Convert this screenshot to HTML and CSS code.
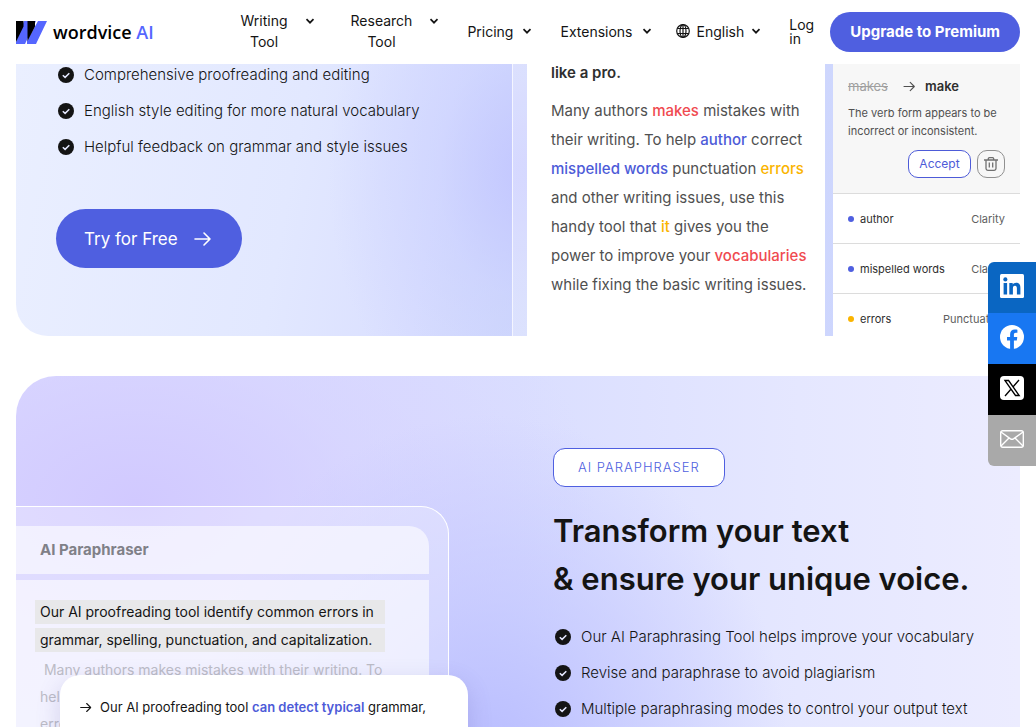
FILE: index.html
```
<!DOCTYPE html>
<html lang="en">

<head>
  <meta charset="utf-8">
  <meta name="viewport" content="width=device-width, initial-scale=1">
  <title>Wordvice AI</title>
  <link rel="stylesheet" href="styles.css">
</head>

<body>

  <!-- shared icons -->
  <svg class="sprite" aria-hidden="true">
    <symbol id="chevron" viewBox="0 0 10 10">
      <path d="M1.5 3.2 5 6.7 8.5 3.2" fill="none" stroke="#141414" stroke-width="1.7" />
    </symbol>
    <symbol id="check" viewBox="0 0 16 16">
      <circle cx="8" cy="8" r="8" fill="#141414" />
      <path d="M4.8 8.2 7.1 10.4 11.3 6.2" fill="none" stroke="#e6e9ff" stroke-width="1.5" />
    </symbol>
    <symbol id="arrow" viewBox="0 0 18 16">
      <path d="M1 8h15M10 2l6 6-6 6" fill="none" stroke="currentColor" stroke-width="1.6" stroke-linecap="round" stroke-linejoin="round" />
    </symbol>
  </svg>

  <header class="header">
    <a class="logo" href="/">
      <svg width="31" height="23" viewBox="0 0 31 23" aria-hidden="true">
        <path d="M8 0h12L9 23H0v-2zM22 0h9L20 23h-9v-3z" fill="#5566ff" />
        <path d="M0 0h7.500v5.500L0 21zM11.500 0h7.500v5.500L11.500 20z" fill="#000" />
      </svg>
      <span>wordvice <b>AI</b></span>
    </a>

    <nav class="nav">
      <button class="nav-item nav-item-tall"><span>Writing<br>Tool</span><svg class="chevron"><use href="#chevron" /></svg></button>
      <button class="nav-item nav-item-tall"><span>Research<br>Tool</span><svg class="chevron"><use href="#chevron" /></svg></button>
      <button class="nav-item">Pricing<svg class="chevron"><use href="#chevron" /></svg></button>
      <button class="nav-item">Extensions<svg class="chevron"><use href="#chevron" /></svg></button>
      <button class="nav-item nav-lang">
        <svg width="14" height="14" viewBox="0 0 14 14" fill="none" stroke="#141414" stroke-width="1.2" aria-hidden="true">
          <circle cx="7" cy="7" r="6.300" />
          <ellipse cx="7" cy="7" rx="3" ry="6.300" />
          <path d="M7 .7v12.600M1.300 4.500h11.400M1.300 9.500h11.400" />
        </svg>
        English<svg class="chevron"><use href="#chevron" /></svg>
      </button>
      <a class="login" href="/login">Log in</a>
    </nav>
    <a class="upgrade" href="/pricing">Upgrade to Premium</a>
  </header>

  <main class="main">

    <section class="card card-proof">
      <div class="proof-intro">
        <ul class="checks">
          <li><svg><use href="#check" /></svg>Comprehensive proofreading and editing</li>
          <li><svg><use href="#check" /></svg>English style editing for more natural vocabulary</li>
          <li><svg><use href="#check" /></svg>Helpful feedback on grammar and style issues</li>
        </ul>
        <a class="try" href="/proofreader">Try for Free
          <svg width="18" height="16"><use href="#arrow" /></svg>
        </a>
      </div>

      <div class="proof-demo">
        <div class="editor">
          <h3>like a pro.</h3>
          <p>Many authors <em class="red">makes</em> mistakes with<br>
            their writing. To help <em class="blue">author</em> correct<br>
            <em class="blue">mispelled words</em> punctuation <em class="yellow">errors</em><br>
            and other writing issues, use this<br>
            handy tool that <em class="yellow">it</em> gives you the<br>
            power to improve your <em class="red">vocabularies</em><br>
            while fixing the basic writing issues.</p>
        </div>

        <div class="suggestions">
          <div class="suggestion-open">
            <div class="change">
              <del>makes</del>
              <svg width="13" height="11"><use href="#arrow" /></svg>
              <ins>make</ins>
            </div>
            <p>The verb form appears to be incorrect or inconsistent.</p>
            <div class="actions">
              <button class="accept">Accept</button>
              <button class="trash" aria-label="Dismiss">
                <svg width="14" height="14" viewBox="0 0 14 14" fill="none" stroke="#707070" stroke-width="1.3">
                  <path d="M0 3h14M4.300 3V1.800Q4.300.7 5.400.7h3.200q1.100 0 1.100 1.100V3M2 3v8.500q0 1.800 1.800 1.800h6.400q1.800 0 1.800-1.800V3M5.300 5.500v5M8.700 5.500v5" />
                </svg>
              </button>
            </div>
          </div>
          <ul class="issues">
            <li class="issue-blue"><span>author</span><span>Clarity</span></li>
            <li class="issue-blue"><span>mispelled words</span><span>Clarity</span></li>
            <li class="issue-yellow"><span>errors</span><span>Punctuation</span></li>
          </ul>
        </div>
      </div>
    </section>

    <section class="card card-para">
      <div class="para-demo">
        <div class="para-frame">
          <h3>AI Paraphraser</h3>
          <div class="para-body">
            <p class="marked"><mark>Our AI proofreading tool identify common errors in</mark><mark>grammar, spelling, punctuation, and capitalization.</mark></p>
            <p class="faded">&nbsp;Many authors makes mistakes with their writing. To<br>help author correct mispelled words punctuation<br>errors and other writing issues.</p>
          </div>
        </div>
        <div class="result">
          <svg width="12" height="11"><use href="#arrow" /></svg>
          <p>Our AI proofreading tool <b>can detect typical</b> grammar,<br>
            <span>spelling, punctuation, <b>and capitalization</b></span></p>
        </div>
      </div>

      <div class="para-intro">
        <span class="tag">AI PARAPHRASER</span>
        <h2>Transform your text<br>&amp; ensure your unique voice.</h2>
        <ul class="checks">
          <li><svg><use href="#check" /></svg>Our AI Paraphrasing Tool helps improve your vocabulary</li>
          <li><svg><use href="#check" /></svg>Revise and paraphrase to avoid plagiarism</li>
          <li><svg><use href="#check" /></svg>Multiple paraphrasing modes to control your output text</li>
        </ul>
      </div>
    </section>

  </main>

  <aside class="share">
    <a class="linkedin" href="#" aria-label="LinkedIn">
      <svg width="24" height="24" viewBox="0 0 24 24">
        <rect width="24" height="24" rx="1.500" fill="#fff" />
        <path d="M3.600 9h3.500v11.400H3.600zM9.300 9h3.400v1.600c.7-1.200 1.900-1.900 3.400-1.900 3.400 0 4.300 2.200 4.300 5.200v6.500h-3.500v-5.800c0-1.500-.2-2.900-1.900-2.900s-2.100 1.300-2.100 2.800v5.900H9.300z" fill="#0a66c2" />
        <circle cx="5.350" cy="5.400" r="2.050" fill="#0a66c2" />
      </svg>
    </a>
    <a class="facebook" href="#" aria-label="Facebook">
      <svg width="24" height="24" viewBox="0 0 24 24">
        <circle cx="12" cy="12" r="12" fill="#fff" />
        <path d="M10.100 24v-8.500H7V12h3.100V9.300c0-3 1.800-4.700 4.600-4.700 1.300 0 2.700.2 2.700.2v3h-1.500c-1.500 0-2 .9-2 1.900V12h3.400l-.5 3.500h-2.900V24z" fill="#1877f2" />
      </svg>
    </a>
    <a class="x" href="#" aria-label="X">
      <svg width="24" height="24" viewBox="0 0 24 24">
        <rect width="24" height="24" rx="4" fill="#fff" />
        <path d="M4.900 4.500h3.700l10.600 15h-3.700zM19 4l-6.300 7.200M10.900 13.200 5 20" fill="none" stroke="#000" stroke-width="1.300" />
      </svg>
    </a>
    <a class="mail" href="#" aria-label="Email">
      <svg width="24" height="18" viewBox="0 0 24 18" fill="none" stroke="#fff" stroke-width="1.400">
        <rect x=".7" y=".7" width="22.600" height="16.600" rx="2" />
        <path d="M1 2l9.500 6.800q1.500 1 3 0L23 2M1 16l8-8M23 16l-8-8" />
      </svg>
    </a>
  </aside>

</body>

</html>
```

FILE: styles.css
```
* {
  box-sizing: border-box;
}

body {
  margin: 0;
  height: 100vh;
  overflow: hidden;
  display: flex;
  flex-direction: column;
  background: #fff;
  color: #141414;
  font-family: Inter, "Liberation Sans", sans-serif;
  font-size: 14px;
}

h2,
h3,
p,
ul {
  margin: 0;
  padding: 0;
}

ul {
  list-style: none;
}

a {
  color: inherit;
  text-decoration: none;
}

button {
  padding: 0;
  border: 0;
  background: none;
  color: inherit;
  font: inherit;
  cursor: pointer;
}

svg {
  flex: none;
}

.sprite {
  position: absolute;
  width: 0;
  height: 0;
}

/* header */

.header {
  display: flex;
  align-items: center;
  flex: none;
  height: 64px;
  padding: 0 16px;
}

.logo {
  display: flex;
  align-items: center;
  gap: 6px;
  margin-right: auto;
  color: #000;
  font-family: "Open Sans", sans-serif;
  font-size: 18px;
  font-weight: 600;
}

.logo b {
  color: #5566ff;
  font-weight: 600;
}

.nav {
  display: flex;
  align-items: center;
  gap: 28px;
  margin-right: 15px;
}

.nav-item {
  display: flex;
  align-items: center;
  gap: 9px;
  padding-bottom: 2px;
  line-height: 21px;
}

.nav-item-tall {
  align-items: flex-start;
  gap: 17px;
  padding-left: 8px;
}

.nav-item-tall .chevron {
  margin-top: 6px;
}

.nav-lang {
  gap: 7px;
  margin-left: -4px;
}

.chevron {
  width: 10px;
  height: 10px;
}

.login {
  width: 26px;
  line-height: 14px;
}

.upgrade {
  padding: 0 20px;
  border-radius: 20px;
  background: #4f5fe0;
  color: #fff;
  font-size: 15px;
  font-weight: 700;
  line-height: 40px;
}

/* cards */

.main {
  display: flex;
  flex-direction: column;
  flex: 1;
  gap: 40px;
  min-height: 0;
  padding: 0 16px;
}

.card {
  display: flex;
  overflow: hidden;
}

.checks {
  font-size: 15px;
  font-weight: 350;
  line-height: 20px;
}

.checks li {
  display: flex;
  align-items: center;
  gap: 10px;
  margin-bottom: 16px;
}

.checks svg {
  width: 16px;
  height: 16px;
}

.card-proof {
  flex: none;
  border-bottom-left-radius: 32px;
  background:
    radial-gradient(ellipse 200px 280px at 51% 40%, #c3c7ff, rgba(200, 206, 255, .5) 45%, rgba(220, 226, 255, 0)),
    linear-gradient(100deg, #eaefff, #e2e8ff 28%, #dadfff 42%, #d0d9fb 52%, #ccd4ff);
}

.proof-intro {
  flex: 1;
  padding: 1px 0 68px 42px;
}

.try {
  display: inline-flex;
  align-items: center;
  gap: 16px;
  height: 59px;
  margin: 36px 0 0 -2px;
  padding: 0 30px 0 28px;
  border-radius: 30px;
  background: #4f5fe0;
  color: #fff;
  font-size: 17px;
}

.proof-demo {
  display: flex;
  gap: 8px;
  padding-left: 14px;
  border-left: 1px solid #f4f5ff;
  background: linear-gradient(90deg, rgba(255, 255, 255, .3) 14px, transparent 15px);
}

.editor {
  width: 298px;
  padding: 0 0 0 24px;
  background: #fff;
  color: #505050;
  font-size: 15px;
  line-height: 29px;
}

.editor h3 {
  margin: -6px 0 9px;
  color: #2e2e2e;
  font-size: 15px;
  font-weight: 600;
}

.editor em {
  font-style: normal;
  font-weight: 500;
}

.red {
  color: #f04a50;
}

.blue {
  color: #4d5bd8;
}

.yellow {
  color: #fab400;
}

.suggestions {
  width: 187px;
  background: #fff;
  color: #505050;
  font-size: 11px;
}

.suggestion-open {
  height: 130px;
  padding: 12px 15px;
  border-bottom: 1px solid #dcdcdc;
  background: #f7f7f7;
  line-height: 18px;
}

.change {
  display: flex;
  align-items: center;
  gap: 9px;
  margin-bottom: 8px;
  font-size: 13px;
  line-height: 20px;
}

.change svg {
  margin-left: 6px;
}

.change del {
  color: #a0a0a0;
}

.change ins {
  color: #2e2e2e;
  font-weight: 600;
  text-decoration: none;
}

.actions {
  display: flex;
  justify-content: flex-end;
  gap: 6px;
  margin-top: 10px;
}

.accept {
  width: 63px;
  height: 28px;
  border: 1px solid #4d5bd8;
  border-radius: 10px;
  background: #fff;
  color: #4d5bd8;
  font-size: 12px;
}

.trash {
  display: grid;
  place-items: center;
  width: 28px;
  height: 28px;
  border: 1px solid #909090;
  border-radius: 10px;
}

.issues li {
  display: flex;
  align-items: center;
  height: 50px;
  padding: 0 15px;
  border-bottom: 1px solid #dcdcdc;
  color: #2e2e2e;
}

.issues li:last-child {
  height: 42px;
  padding-top: 8px;
  border: 0;
}

.issues li::before {
  content: "";
  width: 6px;
  height: 6px;
  margin-right: 6px;
  border-radius: 50%;
  background: #4f5fe0;
}

.issues .issue-yellow::before {
  background: #fab400;
}

.issues span:last-child {
  margin-left: auto;
  color: #606060;
}

.card-para {
  flex: 1;
  border-top-left-radius: 40px;
  background:
    radial-gradient(ellipse 300px 340px at 47% 108%, #b9bdff, rgba(190, 194, 255, .6) 45%, rgba(200, 204, 255, 0)),
    radial-gradient(ellipse 460px 300px at 12% 36%, #d1c9ff, rgba(214, 208, 255, .5) 50%, rgba(220, 220, 255, 0)),
    linear-gradient(90deg, #d9d8ff, #dadeff 50%, #e5e7ff 78%, #ececff);
}

.para-demo {
  position: relative;
  flex: 1;
  padding-top: 130px;
}

.para-frame {
  height: 100%;
  margin-right: 104px;
  padding: 19px 19px 0 0;
  border: 1px solid #fff;
  border-width: 1px 1px 0 0;
  border-top-right-radius: 28px;
  background: rgba(255, 255, 255, .25);
}

.para-frame h3 {
  margin-bottom: 6px;
  padding-left: 24px;
  border-top-right-radius: 20px;
  background: rgba(255, 255, 255, .6);
  color: #808088;
  font-size: 15px;
  font-weight: 700;
  line-height: 48px;
}

.para-body {
  height: 100%;
  padding: 20px 36px 0 19px;
  background: rgba(255, 255, 255, .6);
  font-size: 14px;
  line-height: 27px;
}

.marked mark {
  display: block;
  width: 350px;
  margin-bottom: 4px;
  padding-left: 5px;
  background: #e8e8ea;
  color: #141414;
  line-height: 24px;
  white-space: nowrap;
}

.faded {
  padding-left: 5px;
  color: #bcbcc6;
  white-space: nowrap;
}

/* paraphrased sentence over the text panel */
.result {
  position: absolute;
  top: 299px;
  left: 44px;
  display: flex;
  gap: 8px;
  width: 408px;
  padding: 18px 20px;
  border-radius: 20px;
  background: #fff;
  box-shadow: 0 8px 24px rgba(80, 70, 160, .2);
  font-size: 13px;
  line-height: 28px;
  white-space: nowrap;
}

.result svg {
  margin-top: 9px;
}

.result b {
  color: #4d5bd8;
  font-weight: 600;
}

.result span {
  opacity: .5;
}

.para-intro {
  width: 467px;
  padding-top: 72px;
}

.tag {
  display: inline-block;
  padding: 0 24px;
  border: 1px solid #4f5fe0;
  border-radius: 12px;
  background: #fff;
  color: #4f5fe0;
  font-size: 13px;
  font-weight: 300;
  letter-spacing: 1px;
  line-height: 37px;
}

.para-intro h2 {
  margin: 20px 0 24px;
  font-size: 31px;
  font-weight: 600;
  line-height: 48px;
}

.para-intro .checks {
  padding-left: 2px;
}

/* share buttons */

.share {
  position: fixed;
  top: 262px;
  right: 0;
  width: 48px;
  overflow: hidden;
  border-radius: 6px 0 0 6px;
}

.share a {
  display: flex;
  align-items: center;
  justify-content: center;
  height: 51px;
  padding-bottom: 3px;
}

.linkedin {
  background: #0a66c2;
}

.facebook {
  background: #1877f2;
}

.x {
  background: #000;
}

.mail {
  background: #a9a9a9;
}
```
